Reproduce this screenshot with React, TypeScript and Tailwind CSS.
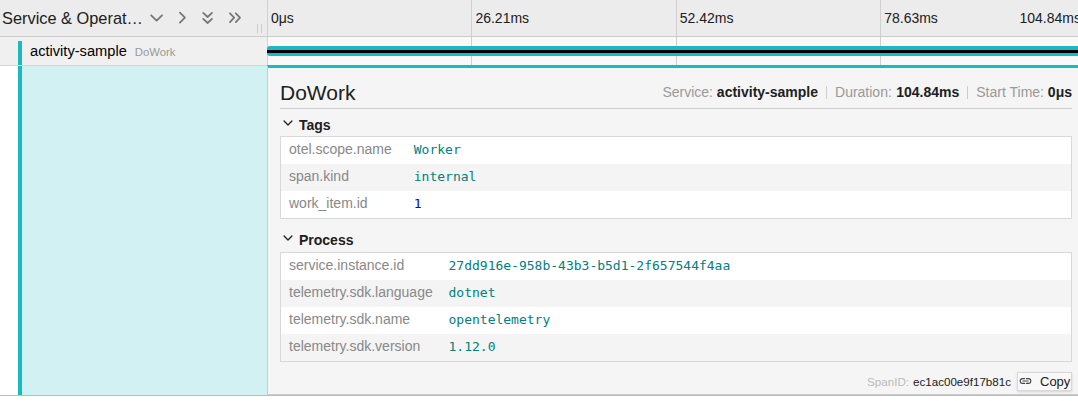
import React from 'react';
import { IoChevronDown } from 'react-icons/io5';

type Pair = { name: string; value: string; numeric?: boolean };

const tags: Pair[] = [
  { name: 'otel.scope.name', value: 'Worker' },
  { name: 'span.kind', value: 'internal' },
  { name: 'work_item.id', value: '1', numeric: true },
];

const processTags: Pair[] = [
  { name: 'service.instance.id', value: '27dd916e-958b-43b3-b5d1-2f657544f4aa' },
  { name: 'telemetry.sdk.language', value: 'dotnet' },
  { name: 'telemetry.sdk.name', value: 'opentelemetry' },
  { name: 'telemetry.sdk.version', value: '1.12.0' },
];

function Chevron({ d }: { d: string }) {
  return (
    <svg viewBox="0 0 16 16" className="size-4 shrink-0" fill="none" stroke="#777" strokeWidth="1.8" strokeLinecap="round" strokeLinejoin="round">
      <path d={d} />
    </svg>
  );
}

function LinkIcon() {
  return (
    <svg viewBox="0 0 14 14" className="mr-[7px] mb-[2px] ml-px size-[14px] shrink-0" fill="none" stroke="#444" strokeWidth="1.1" strokeLinecap="round">
      <path d="M5.6 4.6H3.6a2.4 2.4 0 0 0 0 4.8h2M7.4 4.6h2a2.4 2.4 0 0 1 0 4.8h-2M3.9 7h5.2" />
    </svg>
  );
}

function Section({ title, rows, nameWidth, headHeight }: { title: string; rows: Pair[]; nameWidth: string; headHeight: string }) {
  return (
    <section>
      <h3 className={`flex ${headHeight} items-start pl-px text-[14px] leading-[22px] font-bold text-[#202020]`}>
        <IoChevronDown className="mt-[2px] mr-[4px] size-[14px]" />
        {title}
      </h3>
      <div className="border border-[#d8d8d8] bg-white">
        {rows.map(row => (
          <div key={row.name} className="flex h-[27px] px-2 leading-[25px] even:bg-[#f4f4f4]">
            <span className={`${nameWidth} shrink-0 text-[14px] text-[#888]`}>{row.name}</span>
            <span className={`font-['DejaVu_Sans_Mono',monospace] text-[13px] leading-[25px] ${row.numeric ? 'text-[#0000ff]' : 'text-[#008080]'}`}>
              {row.value}
            </span>
          </div>
        ))}
      </div>
    </section>
  );
}

function Ticks({ labels }: { labels?: string[] }) {
  return (
    <div className="flex shrink-0">
      {[0, 1, 2, 3].map(i => (
        <div key={i} className="flex w-[204.4px] shrink-0 items-center border-l border-[#d0d0d0] pl-[3px]">
          {labels?.[i]}
        </div>
      ))}
    </div>
  );
}

export default function App() {
  return (
    <div className="h-[401px] w-[1078px] overflow-hidden bg-white font-['Liberation_Sans',sans-serif] text-[14px] text-[#202020]">
      <header className="flex h-[37px] border-b border-[#ccc] bg-[#ececec]">
        <div className="relative flex w-[267px] shrink-0 items-center pl-[2px]">
          <span className="w-[146px] text-[16.38px] whitespace-nowrap">Service &amp; Operat…</span>
          <div className="flex gap-[10px]">
            <Chevron d="M3.2 5.3 8.6 10.6 14 5.3" />
            <Chevron d="M5.9 2.6 10.9 7.6 5.9 12.6" />
            <Chevron d="M3.2 2.9 7.6 7 12 2.9M3.2 8.9 7.6 13 12 8.9" />
            <Chevron d="M4 3.3 8.2 7.7 4 12.1M9.8 3.3 14 7.7 9.8 12.1" />
          </div>
          <div className="absolute right-[5px] bottom-[3px] h-[9px] w-[5px] border-x border-[#ccc]" />
        </div>
        <div className="relative flex min-w-0 flex-1 overflow-hidden">
          <Ticks labels={['0μs', '26.21ms', '52.42ms', '78.63ms']} />
          <span className="absolute top-0 left-[752.5px] leading-9">104.84ms</span>
        </div>
      </header>

      <div className="flex h-[29px]">
        <div className="flex w-[267px] shrink-0 border-b border-[#d5d5d5] bg-[#f0f0f0] pt-1 pl-[18px]">
          <div className="flex flex-1 items-baseline border-l-4 border-[#1abac0] pl-2 leading-5 text-black">
            <span className="text-[14.65px]">activity-sample</span>
            <span className="ml-2 text-[11.3px] text-[#999]">DoWork</span>
          </div>
        </div>
        <div className="relative flex min-w-0 flex-1 overflow-hidden bg-[#f9f9f9]">
          <Ticks />
          <div className="absolute top-[9px] left-0 h-[10px] w-[820px] rounded-[3px] bg-[#1abac0]" />
          <div className="absolute top-[13px] left-0 h-[3px] w-[820px] bg-black" />
          <div className="absolute top-[28px] left-0 h-px w-full bg-[#1abac0]" />
        </div>
      </div>

      <div className="flex h-[330px] border-b border-[#bbb]">
        <div className="flex w-[267px] shrink-0 pl-[18px]">
          <div className="flex-1 border-l-4 border-[#1abac0] bg-[#d2f1f2]" />
        </div>
        <div className="flex flex-1 flex-col border-b border-l border-[#ccc] bg-[#f5f5f5]">
          <div className="h-[2px] shrink-0 bg-[#1abac0]" />
          <div className="flex flex-col pr-[6px] pl-3">
            <div className="flex h-[41px] items-center justify-between border-b border-[#ccc] pt-[9px]">
              <h2 className="text-[21px]">DoWork</h2>
              <div className="flex items-center whitespace-nowrap text-[#999]">
                <span>Service: <b className="text-[#202020]">activity-sample</b></span>
                <i className="mx-2 h-[13px] w-px bg-[#ccc]" />
                <span>Duration: <b className="ml-[0.5px] text-[#202020]">104.84ms</b></span>
                <i className="mx-2 h-[13px] w-px bg-[#ccc]" />
                <span>Start Time: <b className="text-[#202020]">0μs</b></span>
              </div>
            </div>
            <div className="mt-[5px] flex flex-col gap-[10px]">
              <Section title="Tags" rows={tags} nameWidth="w-[124.8px]" headHeight="h-[22px]" />
              <Section title="Process" rows={processTags} nameWidth="w-[159.5px]" headHeight="h-[23px]" />
            </div>
            <div className="mt-[10px] flex h-[19px] items-center justify-end text-[11.6px]">
              <span className="mr-[0.8px] text-[#bbb]">SpanID:&nbsp;</span>
              <span>ec1ac00e9f17b81c</span>
              <button className="ml-[6px] flex h-[19px] w-[55px] items-center border border-[#d8d8d8] bg-[#f8f8f8] text-[13px] shadow-sm">
                <LinkIcon />
                Copy
              </button>
            </div>
          </div>
        </div>
      </div>
    </div>
  );
}
